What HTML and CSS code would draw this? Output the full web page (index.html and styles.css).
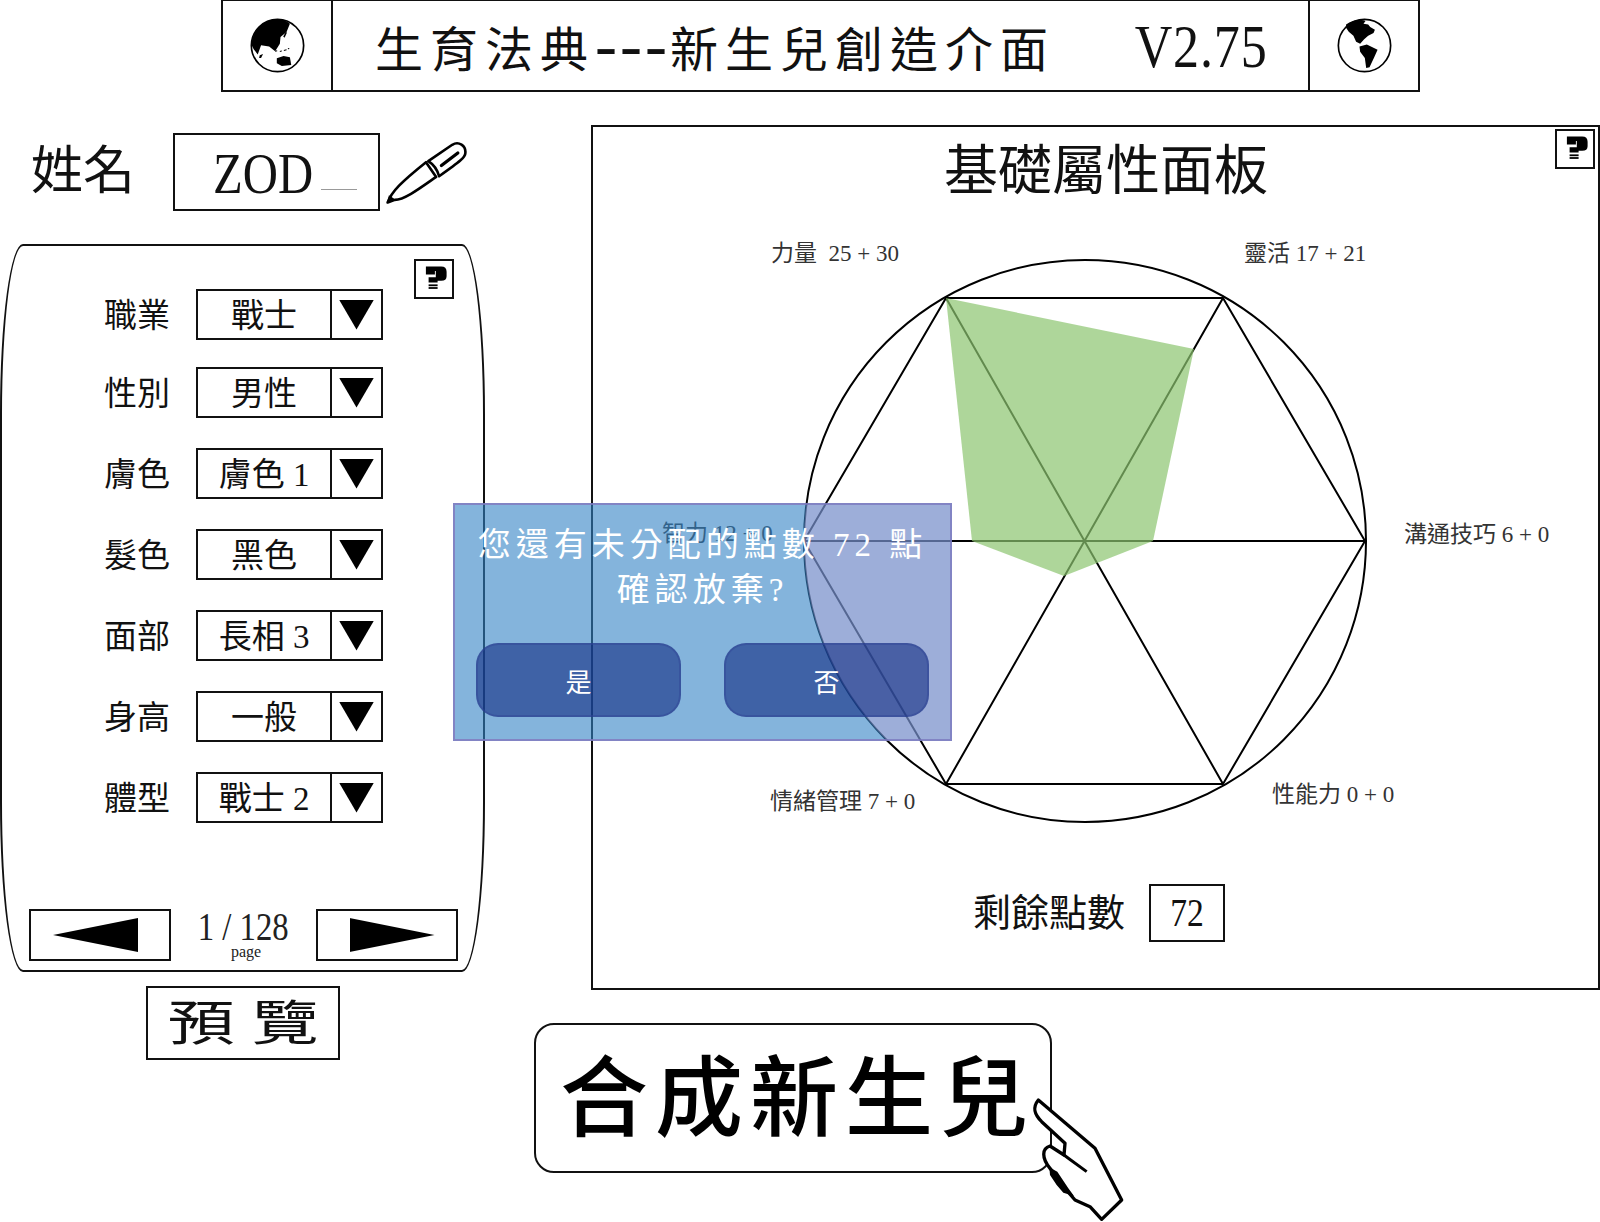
FILE: index.html
```html
<!DOCTYPE html>
<html lang="zh-Hant">
<head>
    <meta charset="UTF-8">
    <title>生育法典</title>
    <link rel="stylesheet" href="styles.css">
</head>
<body>
    <svg class="defs" width="0" height="0">
        <symbol id="help" viewBox="0 0 40 40">
            <path d="M11 6H28Q34 6 34 12V17Q34 22 28 22H24V24H14V18H22V11H21V15H11Z"/>
            <rect x="14" y="26" width="10" height="2"/>
            <rect x="14" y="29" width="10" height="2"/>
        </symbol>
    </svg>

    <header class="top-bar">
        <div class="globe-cell">
            <svg class="globe" viewBox="0 0 170 170">
                <circle cx="85" cy="85" r="78" fill="#fff" stroke="#000" stroke-width="5"/>
                <path d="M8 84C8 38 46 7 85 7C100 7 112 12 122 20L112 45L94 60L92 80L78 102L60 88L36 84L26 112L14 96Z"/>
                <path d="M102 58L110 44L113 47L106 62Z"/>
                <path d="M83 123L103 116L122 120L126 143L98 146L83 138Z"/>
                <path d="M32 114L42 110L36 122L30 122Z"/>
                <path d="M78 102L84 101M92 103L98 101M104 100L112 98M116 95L120 94" stroke="#000" stroke-width="3"/>
            </svg>
        </div>
        <div class="title-cell">
            <span class="title-main">生育法典<span class="dashes">---</span>新生兒創造介面</span>
            <span class="title-ver">V2.75</span>
        </div>
        <div class="globe-cell">
            <svg class="globe" viewBox="0 0 170 170">
                <circle cx="85" cy="85" r="78" fill="#fff" stroke="#000" stroke-width="5"/>
                <path d="M30 22C48 8 78 6 88 12L82 20L96 22L102 30L116 38L112 48L96 56L84 66L72 80L60 74L52 56L38 44L30 32Z"/>
                <path d="M70 88L92 82L124 98L114 120L100 150L90 152L86 122L72 104Z"/>
            </svg>
        </div>
    </header>

    <main class="layout">
        <section class="left-col">
            <div class="name-row">
                <span class="name-label">姓名</span>
                <div class="name-box"><span class="squeeze">ZOD</span><span class="caret"></span></div>
                <svg class="pen" viewBox="40 55 250 200">
                    <path d="M48 248C60 215 90 185 165 125L196 170C150 202 100 240 70 240Z" fill="#fff" stroke="#000" stroke-width="8" stroke-linejoin="round"/>
                    <path d="M46 250L52 226L74 240Z"/>
                    <path d="M172 122L245 72C265 60 287 75 285 97C285 110 270 122 205 168C200 150 188 132 172 122Z" fill="#fff" stroke="#000" stroke-width="8" stroke-linejoin="round"/>
                    <path d="M212 135L262 97" stroke="#000" stroke-width="10" stroke-linecap="round"/>
                </svg>
            </div>

            <div class="option-panel">
                <button class="help help-left"><svg><use href="#help"/></svg></button>
                <div class="options">
                    <div class="option first"><span class="option-label">職業</span><div class="select"><span class="select-value">戰士</span><span class="select-arrow"></span></div></div>
                    <div class="option"><span class="option-label">性別</span><div class="select"><span class="select-value">男性</span><span class="select-arrow"></span></div></div>
                    <div class="option"><span class="option-label">膚色</span><div class="select"><span class="select-value">膚色 1</span><span class="select-arrow"></span></div></div>
                    <div class="option"><span class="option-label">髮色</span><div class="select"><span class="select-value">黑色</span><span class="select-arrow"></span></div></div>
                    <div class="option"><span class="option-label">面部</span><div class="select"><span class="select-value">長相 3</span><span class="select-arrow"></span></div></div>
                    <div class="option"><span class="option-label">身高</span><div class="select"><span class="select-value">一般</span><span class="select-arrow"></span></div></div>
                    <div class="option"><span class="option-label">體型</span><div class="select"><span class="select-value">戰士 2</span><span class="select-arrow"></span></div></div>
                </div>
                <div class="pager">
                    <div class="page-btn"><span class="tri-left"></span></div>
                    <div class="page-info">
                        <div class="page-num"><span class="squeeze">1 / 128</span></div>
                        <div class="page-word">page</div>
                    </div>
                    <div class="page-btn"><span class="tri-right"></span></div>
                </div>
            </div>

            <div class="preview"><span class="stretch">預 覽</span></div>
        </section>

        <section class="stat-panel">
            <button class="help help-right"><svg><use href="#help"/></svg></button>
            <h1 class="stat-title">基礎屬性面板</h1>
            <div class="radar">
                <svg class="radar-chart" width="565" height="565" viewBox="0 0 565 565">
                    <g fill="none" stroke="#000" stroke-width="2">
                        <circle cx="283" cy="283" r="281"/>
                        <path d="M144 40H421L563 283L421 526H144L2 283Z"/>
                        <path d="M144 40L421 526M421 40L144 526M2 283H563"/>
                    </g>
                    <polygon class="radar-fill" points="144,40 392,91 351,283 262,318 170,283"/>
                </svg>
                <span class="stat stat-str">力量&nbsp; 25 + 30</span>
                <span class="stat stat-agi">靈活 17 + 21</span>
                <span class="stat stat-com">溝通技巧 6 + 0</span>
                <span class="stat stat-sex">性能力 0 + 0</span>
                <span class="stat stat-emo">情緒管理 7 + 0</span>
                <span class="stat stat-int">智力 12 + 0</span>
            </div>
            <div class="points">
                <span class="points-label">剩餘點數</span>
                <div class="points-box"><span class="squeeze">72</span></div>
            </div>
        </section>

        <div class="make-btn">
            合成新生兒
            <svg class="hand" viewBox="0 0 450 486">
                <path d="M115 120L285 265L365 420L305 478L270 440L225 420L195 385L150 325C125 295 125 265 150 258L192 285L195 250L125 185C105 165 95 145 115 120Z" fill="#fff" stroke="#000" stroke-width="10" stroke-linejoin="round"/>
                <path d="M192 285L207 296L260 335" fill="none" stroke="#000" stroke-width="9"/>
                <path d="M148 322L172 335L205 385L222 408L190 398L170 375L150 345Z"/>
            </svg>
        </div>
    </main>

    <div class="dialog">
        <svg class="dialog-tint" width="495" height="234"><circle cx="630" cy="36" r="281"/></svg>
        <p class="dialog-text">您還有未分配的點數 72 點<br>確認放棄?</p>
        <div class="dialog-btns">
            <button class="dialog-btn">是</button>
            <button class="dialog-btn">否</button>
        </div>
    </div>
</body>
</html>
```

FILE: styles.css
```css
* {
    box-sizing: border-box;
}

body {
    margin: 0;
    width: 1600px;
    height: 1222px;
    overflow: hidden;
    position: relative;
    background: #fff;
    color: #111;
    font-family: "Liberation Serif", "Noto Sans CJK TC", serif;
}

.defs {
    position: absolute;
}

.squeeze {
    display: inline-block;
    transform: scaleX(.84);
}

/* top bar */
.top-bar {
    display: flex;
    width: 1199px;
    height: 92px;
    margin-left: 221px;
    border: 2px solid #111;
    border-top-width: 1px;
}

.globe-cell {
    flex: none;
    width: 108px;
    display: flex;
    align-items: center;
    justify-content: center;
}

.globe {
    width: 57px;
    height: 57px;
}

.title-cell {
    flex: 1;
    display: flex;
    align-items: center;
    justify-content: space-between;
    padding: 0 28px 0 42px;
    border-left: 2px solid #111;
    border-right: 2px solid #111;
}

.title-main {
    font-size: 48px;
    letter-spacing: 7px;
}

.dashes {
    letter-spacing: 3px;
    font-size: 66px;
    line-height: 1;
}

.title-ver {
    font-size: 62px;
    line-height: 1;
    letter-spacing: 1px;
    transform: scaleX(.84);
}

/* main grid */
.layout {
    display: grid;
    grid-template-columns: 534px 57px 1009px;
    grid-template-rows: 865px 150px;
    row-gap: 33px;
    margin-top: 33px;
}

.left-col {
    grid-column: 1;
    grid-row: 1 / span 2;
    padding-top: 8px;
}

.name-row {
    display: flex;
    align-items: center;
    height: 78px;
}

.name-label {
    width: 173px;
    padding-left: 31px;
    font-size: 52px;
    line-height: 1;
}

.name-box {
    width: 207px;
    height: 78px;
    border: 2px solid #111;
    display: flex;
    align-items: center;
    padding: 4px 0 0 38px;
    font-size: 56px;
    position: relative;
}

.name-box .squeeze {
    transform: scaleX(.87);
    transform-origin: left center;
}

.caret {
    position: absolute;
    left: 146px;
    top: 54px;
    width: 36px;
    height: 1px;
    background: #999;
}

.pen {
    width: 82px;
    height: 66px;
    margin-left: 5px;
}

/* option panel */
.option-panel {
    position: relative;
    width: 485px;
    height: 728px;
    margin-top: 33px;
    padding-top: 43px;
    border: 2px solid #111;
    border-radius: 23px / 170px;
}

.help {
    position: absolute;
    width: 40px;
    height: 40px;
    padding: 0;
    background: #fff;
    border: 2px solid #111;
}

.help svg {
    display: block;
    width: 36px;
    height: 36px;
}

.help-left {
    top: 13px;
    right: 29px;
}

.help-right {
    top: 2px;
    right: 3px;
}

.options {
    display: flex;
    flex-direction: column;
    gap: 30px;
}

.option {
    display: flex;
    align-items: center;
    height: 51px;
    padding-left: 102px;
}

.option.first {
    margin-bottom: -3px;
}

.option-label {
    width: 66px;
    margin-right: 26px;
    padding-bottom: 3px;
    font-size: 33px;
    white-space: nowrap;
}

.select {
    display: flex;
    width: 187px;
    height: 51px;
    border: 2px solid #111;
}

.select-value {
    flex: 1;
    text-align: center;
    font-size: 33px;
    line-height: 51px;
    white-space: nowrap;
}

.select-arrow {
    flex: none;
    width: 51px;
    display: flex;
    align-items: center;
    justify-content: center;
    border-left: 2px solid #111;
}

.select-arrow::after {
    content: "";
    width: 35px;
    height: 30px;
    background: #000;
    clip-path: polygon(0 0, 100% 0, 50% 100%);
}

/* pager */
.pager {
    display: flex;
    margin: 86px 0 0 27px;
}

.page-btn {
    width: 142px;
    height: 52px;
    border: 2px solid #111;
    display: flex;
    align-items: center;
    justify-content: center;
}

.tri-left,
.tri-right {
    width: 85px;
    height: 34px;
    background: #000;
}

.tri-left {
    margin-right: 9px;
    clip-path: polygon(0 50%, 100% 0, 100% 100%);
}

.tri-right {
    margin-left: 10px;
    clip-path: polygon(0 0, 100% 50%, 0 100%);
}

.page-info {
    width: 145px;
    text-align: center;
    color: #222;
}

.page-num {
    font-size: 39px;
    line-height: 35px;
    white-space: nowrap;
}

.page-word {
    padding-left: 5px;
    font-size: 16px;
    line-height: 16px;
}

.preview {
    display: flex;
    align-items: center;
    justify-content: center;
    width: 194px;
    height: 74px;
    margin: 14px 0 0 146px;
    padding-bottom: 8px;
    border: 2px solid #111;
    font-size: 48px;
}

.stretch {
    display: inline-block;
    transform: scaleX(1.4);
    white-space: pre;
}

/* stats */
.stat-panel {
    grid-column: 3;
    grid-row: 1;
    position: relative;
    border: 2px solid #111;
    padding-top: 10px;
}

.stat-title {
    margin: 0 0 0 351px;
    font-size: 54px;
    font-weight: 400;
    line-height: 70px;
}

.radar {
    position: relative;
    width: 565px;
    height: 565px;
    margin: 51px 0 0 209px;
}

.radar-chart {
    display: block;
}

.radar-fill {
    fill: rgb(140, 197, 111);
    opacity: .7;
}

.stat {
    position: absolute;
    font-size: 23px;
    line-height: 28px;
    color: #333;
    white-space: nowrap;
}

.stat-str { left: -31px; top: -18px; }
.stat-agi { left: 442px; top: -18px; }
.stat-com { left: 602px; top: 263px; }
.stat-sex { left: 470px; top: 523px; }
.stat-emo { left: -32px; top: 530px; }
.stat-int { left: -140px; top: 262px; }

.points {
    display: flex;
    align-items: center;
    gap: 24px;
    margin: 61px 0 0 380px;
}

.points-label {
    font-size: 38px;
    line-height: 1;
}

.points-box {
    width: 76px;
    height: 58px;
    border: 2px solid #111;
    text-align: center;
    font-size: 40px;
    line-height: 54px;
}

/* big button */
.make-btn {
    grid-column: 2 / span 2;
    grid-row: 2;
    justify-self: start;
    position: relative;
    width: 518px;
    height: 150px;
    padding-left: 24px;
    border: 2px solid #111;
    border-radius: 20px;
    font-size: 88px;
    font-weight: 500;
    letter-spacing: 7px;
    line-height: 150px;
    white-space: nowrap;
    color: #000;
}

.hand {
    position: absolute;
    left: 464px;
    top: 35px;
    width: 150px;
    height: 162px;
}

/* dialog */
.dialog {
    position: absolute;
    left: 453px;
    top: 503px;
    width: 499px;
    height: 238px;
    padding-top: 18px;
    background: rgba(50, 130, 197, .6);
    border: 2px solid rgba(130, 120, 190, .8);
    overflow: hidden;
}

.dialog-tint {
    position: absolute;
    left: 0;
    top: 0;
    fill: rgba(215, 163, 213, .3);
}

.dialog-text {
    position: relative;
    margin: 0;
    text-align: center;
    color: #fff;
    font-size: 33px;
    letter-spacing: 5px;
    line-height: 45px;
}

.dialog-btns {
    position: relative;
    display: flex;
    gap: 43px;
    margin: 30px 0 0 21px;
}

.dialog-btn {
    width: 205px;
    height: 74px;
    padding: 0;
    border: 2px solid rgba(50, 70, 150, .5);
    border-radius: 22px;
    background: rgba(17, 43, 130, .6);
    color: #fff;
    font-family: inherit;
    font-size: 26px;
}
```
